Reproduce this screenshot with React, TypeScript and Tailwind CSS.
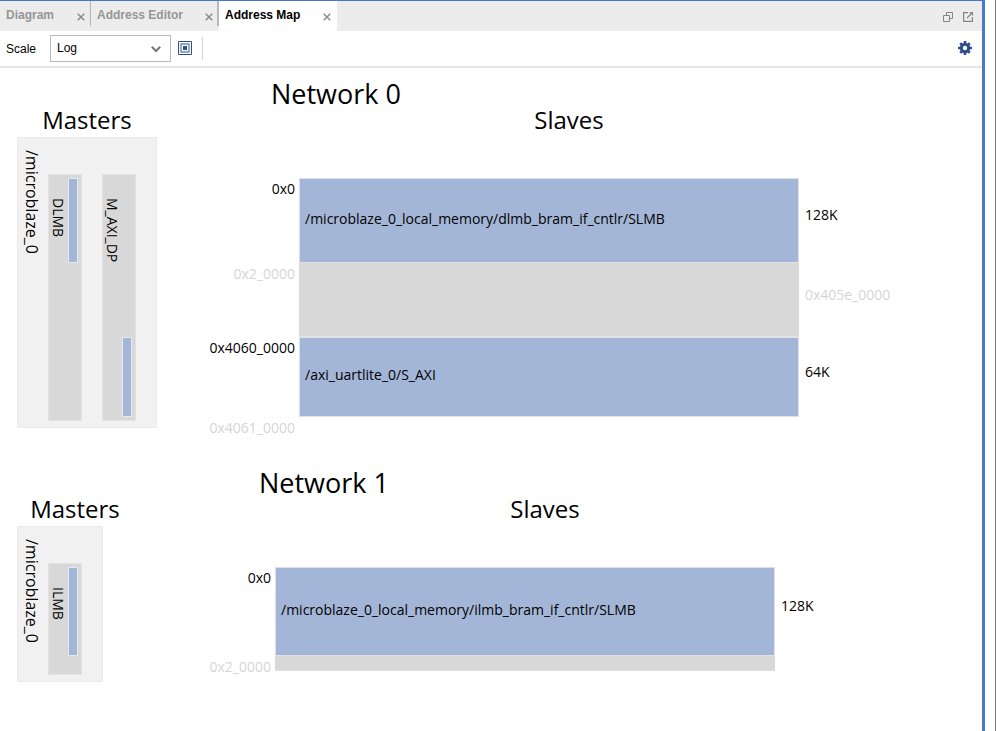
import React from "react";

type Range = { top: number; height: number };
type Port = { name: string; range: Range };
type Row = {
  address: string;
  size?: string;
  slave?: string;
  height: string;
  free?: boolean;
};
type Network = {
  title: string;
  titleIndent: string;
  mastersWidth: string;
  boxWidth: string;
  laneHeight: string;
  master: string;
  ports: Port[];
  rows: Row[];
};

const networks: Network[] = [
  {
    title: "Network 0",
    titleIndent: "pl-[254px]",
    mastersWidth: "w-[140px]",
    boxWidth: "w-[140px]",
    laneHeight: "h-[247px]",
    master: "/microblaze_0",
    ports: [
      { name: "DLMB", range: { top: 4, height: 85 } },
      { name: "M_AXI_DP", range: { top: 163, height: 80 } },
    ],
    rows: [
      {
        address: "0x0",
        size: "128K",
        slave: "/microblaze_0_local_memory/dlmb_bram_if_cntlr/SLMB",
        height: "h-[84px]",
      },
      { address: "0x2_0000", size: "0x405e_0000", height: "h-[75px]", free: true },
      { address: "0x4060_0000", size: "64K", slave: "/axi_uartlite_0/S_AXI", height: "h-[79px]" },
      { address: "0x4061_0000", height: "h-6", free: true },
    ],
  },
  {
    title: "Network 1",
    titleIndent: "pl-[242px]",
    mastersWidth: "w-[116px]",
    boxWidth: "w-[86px]",
    laneHeight: "h-[112px]",
    master: "/microblaze_0",
    ports: [{ name: "ILMB", range: { top: 4, height: 89 } }],
    rows: [
      {
        address: "0x0",
        size: "128K",
        slave: "/microblaze_0_local_memory/ilmb_bram_if_cntlr/SLMB",
        height: "h-[88px]",
      },
      { address: "0x2_0000", size: "", height: "h-4", free: true },
    ],
  },
];

function CloseIcon() {
  return (
    <svg width="8" height="8" viewBox="0 0 8 8" fill="none" stroke="#8c8c8c" strokeWidth="1.5">
      <path d="M.7.7l6.6 6.6M7.3.7L.7 7.3" />
    </svg>
  );
}

function Tab({ name, active, className }: { name: string; active?: boolean; className: string }) {
  return (
    <div className={`flex shrink-0 justify-between pl-1.5 ${active ? "bg-white" : ""} ${className}`}>
      <button
        type="button"
        role="tab"
        aria-selected={!!active}
        className={`h-7 whitespace-nowrap text-xs font-bold ${active ? "text-black" : "text-[#969696]"}`}
      >
        {name}
      </button>
      <button type="button" aria-label={`Close ${name}`} className="flex h-8 items-center">
        <CloseIcon />
      </button>
    </div>
  );
}

function TabBar() {
  return (
    <div className="flex h-[30px] items-start bg-[#ececec]">
      <div role="tablist" className="flex h-[30px] items-start">
        <Tab name="Diagram" className="h-[25px] w-[91px] border-r border-[#b8b8b8] pr-[5px]" />
        <Tab name="Address Editor" className="h-[25px] w-32 border-r-2 border-[#b8b8b8] pr-1" />
        <Tab name="Address Map" active className="h-[30px] w-[118px] pr-1.5" />
      </div>
      <div className="ml-auto flex h-8 items-center gap-2.5 pr-[9px]">
        <button type="button" aria-label="Restore">
          <svg width="10" height="10" viewBox="0 0 10 10" fill="none" stroke="#858585">
            <path d="M3.5 3.5v-3h6v6h-3" />
            <path d="M.5 3.5h6v6h-6z" />
          </svg>
        </button>
        <button type="button" aria-label="Float">
          <svg width="10" height="10" viewBox="0 0 10 10" fill="none" stroke="#858585">
            <path d="M5 .6H.6v8.8h8.8V5" strokeWidth="1.2" />
            <path d="M4 6l4-4" strokeWidth="1.3" />
            <path d="M6 0h4v4z" fill="#858585" stroke="none" />
          </svg>
        </button>
      </div>
    </div>
  );
}

function Toolbar() {
  return (
    <div className="flex h-[37px] items-center border-b-2 border-[#e6e6e6] pl-1.5 pr-2.5">
      <label htmlFor="scale" className="w-11 text-xs">
        Scale
      </label>
      <div className="relative">
        <select
          id="scale"
          defaultValue="Log"
          className="block h-[27px] w-[121px] appearance-none border border-[#b9b9b9] bg-white pb-0.5 pl-1.5 text-xs text-black"
        >
          <option>Log</option>
          <option>Linear</option>
        </select>
        <svg
          className="pointer-events-none absolute right-2.5 top-2.5"
          width="10"
          height="8"
          viewBox="0 0 10 8"
          fill="none"
          stroke="#777"
          strokeWidth="2"
        >
          <path d="M.8 1.8L5 6l4.2-4.2" />
        </svg>
      </div>
      <button type="button" aria-label="Fit" className="ml-[7px] pb-0.5">
        <svg width="14" height="14" viewBox="0 0 14 14" fill="none">
          <path d="M.5.5h13v13H.5z" stroke="#2d4e86" />
          <path d="M3 3h8v8H3z" stroke="#7088b1" strokeWidth="1.4" />
          <path d="M5 5h4v4H5z" fill="#2d4e86" />
        </svg>
      </button>
      <div className="ml-2.5 h-[23px] w-px bg-[#d4d4d4]" />
      <button type="button" aria-label="Settings" className="ml-auto pb-0.5">
        <svg width="14" height="14" viewBox="0 0 14 14" fill="none" stroke="#2d4e86">
          <path d="M7 0v14M0 7h14M2.2 2.2l9.6 9.6M11.8 2.2l-9.6 9.6" strokeWidth="2.6" />
          <circle cx="7" cy="7" r="3.7" fill="#fff" strokeWidth="3" />
        </svg>
      </button>
    </div>
  );
}

function Lane({ port, height }: { port: Port; height: string }) {
  return (
    <div className={`flex w-[34px] justify-between border border-[#e2e2e2] bg-[#d8d8d8] pr-[3px] ${height}`}>
      <span className="pt-[23px] text-sm leading-[18px] [writing-mode:vertical-rl]">{port.name}</span>
      <div
        className="w-2.5 border border-[#e4e8ef] bg-[#a4b6d7]"
        style={{ marginTop: port.range.top - 1, height: port.range.height }}
      />
    </div>
  );
}

function AddressRow({ row }: { row: Row }) {
  const fill = row.slave
    ? "border border-b-0 border-[#dbe0e9] bg-[#a4b6d7]"
    : row.size !== undefined
      ? "border-y border-[#e2e2e2] bg-[#d8d8d8]"
      : "border-t border-[#e2e2e2]";
  return (
    <div className={`flex ${row.height}`}>
      <span
        className={`w-[90px] shrink-0 pr-1 text-right text-sm ${row.free ? "leading-6 text-[#d5d5d5]" : "leading-[22px]"}`}
      >
        {row.address}
      </span>
      <div className={`flex min-w-0 max-w-[500px] flex-1 items-center pb-1 pl-[5px] ${fill}`}>
        <span className="whitespace-nowrap text-sm">{row.slave}</span>
      </div>
      <span
        className={`flex w-[130px] shrink-0 items-center pb-2.5 pl-1.5 text-sm ${row.free ? "text-[#d5d5d5]" : ""}`}
      >
        {row.size}
      </span>
    </div>
  );
}

function NetworkMap({ network }: { network: Network }) {
  return (
    <section className="min-h-[389px] pl-[17px] pt-3">
      <h2 className={`text-[27px] leading-7 ${network.titleIndent}`}>{network.title}</h2>
      <div className="flex gap-[52px]">
        <div className={`shrink-0 ${network.mastersWidth}`}>
          <h3 className="mb-1.5 text-center text-2xl leading-[23px]">Masters</h3>
          <div className={`flex border border-[#ebebeb] bg-[#f1f1f1] pb-1.5 ${network.boxWidth}`}>
            <span className="w-[30px] pr-[5px] pt-3 text-base leading-[22px] [writing-mode:vertical-rl]">
              {network.master}
            </span>
            <div className="flex gap-5 pt-9">
              {network.ports.map((port) => (
                <Lane key={port.name} port={port} height={network.laneHeight} />
              ))}
            </div>
          </div>
        </div>
        <div className="min-w-0 max-w-[720px] flex-1">
          <h3 className="mb-[47px] text-center text-2xl leading-[23px]">Slaves</h3>
          {network.rows.map((row) => (
            <AddressRow key={row.address} row={row} />
          ))}
        </div>
      </div>
    </section>
  );
}

export default function App() {
  return (
    <div className="flex h-screen border-r border-[#777] bg-white pr-2.5 font-['Liberation_Sans',Arial,sans-serif] text-black">
      <div className="flex min-w-0 flex-1 flex-col border-r-[3px] border-t border-[#4678cc]">
        <TabBar />
        <Toolbar />
        <main className="min-h-0 flex-1 overflow-hidden font-['Open_Sans',sans-serif]">
          {networks.map((network) => (
            <NetworkMap key={network.title} network={network} />
          ))}
        </main>
      </div>
    </div>
  );
}
